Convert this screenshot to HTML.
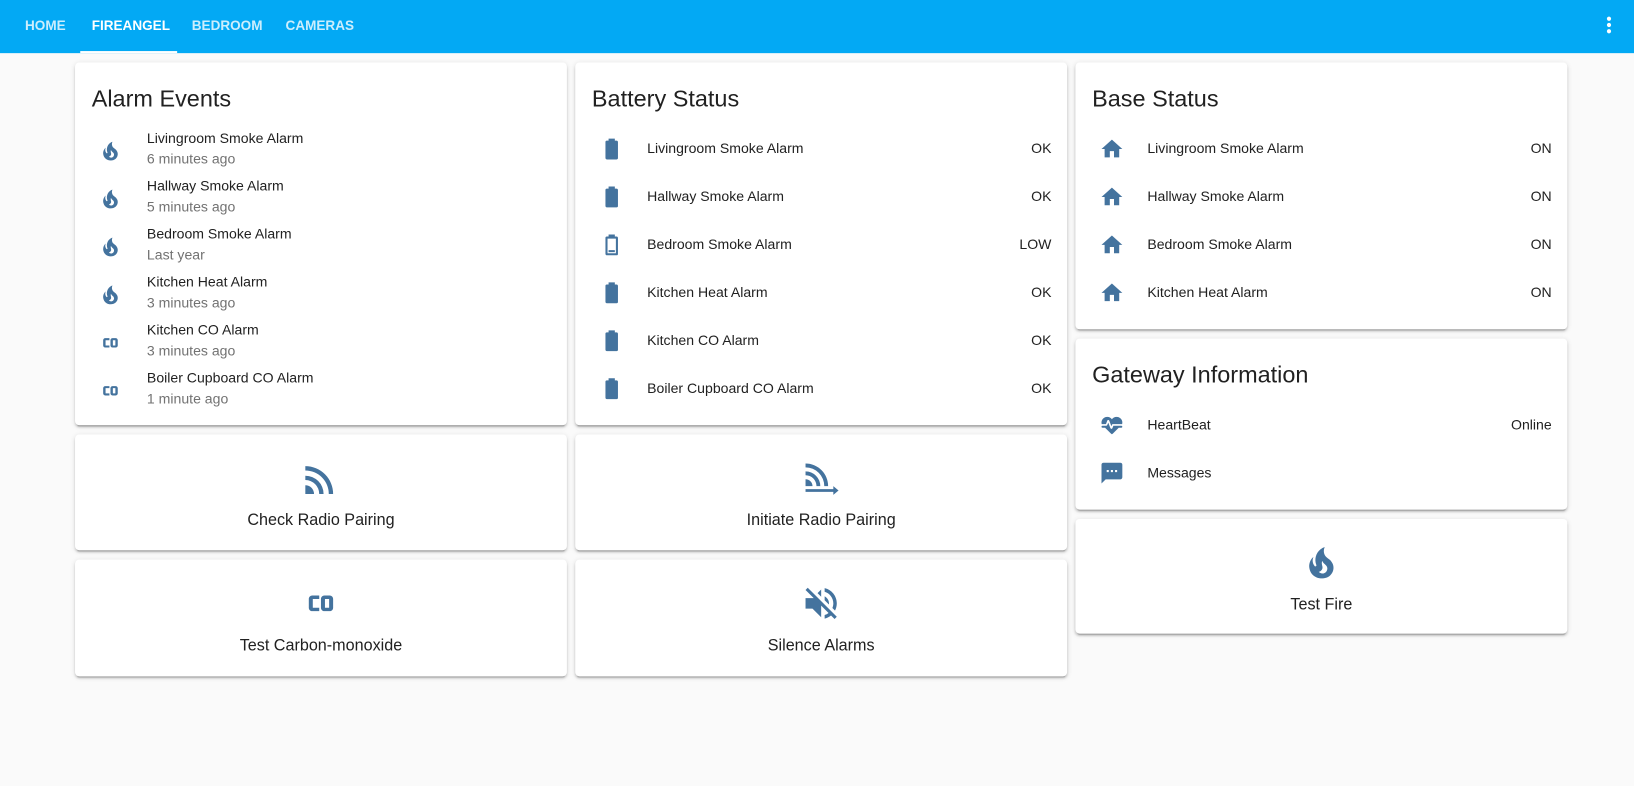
<!DOCTYPE html>
<html><head><meta charset="utf-8"><style>
*{box-sizing:border-box;margin:0;padding:0}
body{width:1634px;height:785px;background:#fafafa;font-family:"Liberation Sans",sans-serif;color:#212121;position:relative;overflow:hidden}
#w{position:absolute;left:0;top:0;width:1568px;height:754px;transform:scale(1.04209);transform-origin:0 0}
.hdr{position:absolute;left:0;top:0;width:1568px;height:51px;background:#03a9f4}
.tab{position:absolute;top:17px;font-size:13px;font-weight:bold;color:rgba(255,255,255,.8)}
.card{position:absolute;background:#fff;border-radius:4px;box-shadow:0 2px 2px 0 rgba(0,0,0,.14),0 1px 5px 0 rgba(0,0,0,.12),0 3px 1px -2px rgba(0,0,0,.2)}
.title{position:absolute;left:16px;top:22px;font-size:22.5px;color:#212121}
.row{position:absolute;left:0;width:472px;height:46px;font-size:13.5px}
.row svg{position:absolute;left:23px;top:11px;width:24px;height:24px;fill:#44739e}
.row .n{position:absolute;left:69px;top:15px}
.row .v{position:absolute;right:15px;top:15px}
.ev{position:absolute;left:0;width:472px;height:46px;font-size:13.5px}
.ev svg{position:absolute;left:22px;top:11px;width:24px;height:24px;fill:#44739e}
.ev .n{position:absolute;left:69px;top:3px}
.ev .s{position:absolute;left:69px;top:23px;color:#727272}
.btn svg{position:absolute;left:216px;top:22px;width:40px;height:40px;fill:#44739e}
.btn .l{position:absolute;left:0;width:100%;top:74px;text-align:center;font-size:15.5px}
</style></head><body>
<div id="w">
<div class="hdr">
<div class="tab" style="left:24px">HOME</div>
<div class="tab" style="left:88px;color:#fff">FIREANGEL</div>
<div class="tab" style="left:184px">BEDROOM</div>
<div class="tab" style="left:274px">CAMERAS</div>
<div style="position:absolute;left:77px;top:49px;width:93px;height:2px;background:#fff"></div>
<div style="position:absolute;left:1542px;top:16px;width:4px;height:4px;border-radius:2px;background:#fff;box-shadow:0 6px 0 #fff,0 12px 0 #fff"></div>
</div>

<svg width="0" height="0" style="position:absolute"><defs>
<symbol id="fire" viewBox="0 0 24 24"><path d="M17.66 11.2C17.43 10.9 17.15 10.64 16.89 10.38C16.22 9.78 15.46 9.35 14.82 8.72C13.33 7.26 13 4.85 13.95 3C13 3.23 12.17 3.75 11.46 4.32C8.87 6.4 7.85 10.07 9.07 13.22C9.11 13.32 9.15 13.42 9.15 13.55C9.15 13.77 9 13.97 8.8 14.05C8.57 14.15 8.33 14.09 8.14 13.93C8.08 13.88 8.04 13.83 8 13.76C6.87 12.33 6.69 10.28 7.45 8.64C5.78 10 4.87 12.3 5 14.47C5.06 14.97 5.12 15.47 5.29 15.97C5.43 16.57 5.7 17.17 6 17.7C7.08 19.43 8.95 20.67 10.96 20.92C13.1 21.19 15.39 20.8 17.03 19.32C18.86 17.66 19.5 15 18.56 12.72L18.43 12.46C18.22 12 17.66 11.2 17.66 11.2M14.5 17.5C14.22 17.74 13.76 18 13.4 18.1C12.28 18.5 11.16 17.94 10.5 17.28C11.69 17 12.4 16.12 12.61 15.23C12.78 14.43 12.46 13.77 12.33 13C12.21 12.26 12.23 11.63 12.5 10.94C12.69 11.32 12.89 11.7 13.13 12C13.9 13 15.11 13.44 15.37 14.8C15.41 14.94 15.43 15.08 15.43 15.23C15.46 16.05 15.1 16.95 14.5 17.5H14.5Z"/></symbol>
<symbol id="co" viewBox="0 0 24 24"><path d="M6 7.5C4.9 7.5 4 8.4 4 9.5V14.5C4 15.6 4.9 16.5 6 16.5H10V14.5H6.3V9.5H10V7.5H6M13 7.5C11.9 7.5 11 8.4 11 9.5V14.5C11 15.6 11.9 16.5 13 16.5H16C17.1 16.5 18 15.6 18 14.5V9.5C18 8.4 17.1 7.5 16 7.5H13M13.3 9.5H15.7V14.5H13.3V9.5Z" transform="translate(1 0)"/></symbol>
<symbol id="bat" viewBox="0 0 24 24"><path d="M16.67,4H15V2H9V4H7.33A1.33,1.33 0 0,0 6,5.33V20.67C6,21.4 6.6,22 7.33,22H16.67A1.33,1.33 0 0,0 18,20.67V5.33C18,4.6 17.4,4 16.67,4Z"/></symbol>
<symbol id="batlow" viewBox="0 0 24 24"><path d="M16,20H8V6H16M16.67,4H15V2H9V4H7.33A1.33,1.33 0 0,0 6,5.33V20.67C6,21.4 6.6,22 7.33,22H16.67A1.33,1.33 0 0,0 18,20.67V5.33C18,4.6 17.4,4 16.67,4ZM9,17H15V19H9Z"/></symbol>
<symbol id="home" viewBox="0 0 24 24"><path d="M10,20V14H14V20H19V12H22L12,3L2,12H5V20H10Z"/></symbol>
</defs></svg>

<div class="card" style="left:72px;top:60px;width:472px;height:348px">
<div class="title">Alarm Events</div>
<div class="ev" style="top:62px"><svg><use href="#fire"/></svg><div class="n">Livingroom Smoke Alarm</div><div class="s">6 minutes ago</div></div>
<div class="ev" style="top:108px"><svg><use href="#fire"/></svg><div class="n">Hallway Smoke Alarm</div><div class="s">5 minutes ago</div></div>
<div class="ev" style="top:154px"><svg><use href="#fire"/></svg><div class="n">Bedroom Smoke Alarm</div><div class="s">Last year</div></div>
<div class="ev" style="top:200px"><svg><use href="#fire"/></svg><div class="n">Kitchen Heat Alarm</div><div class="s">3 minutes ago</div></div>
<div class="ev" style="top:246px"><svg><use href="#co"/></svg><div class="n">Kitchen CO Alarm</div><div class="s">3 minutes ago</div></div>
<div class="ev" style="top:292px"><svg><use href="#co"/></svg><div class="n">Boiler Cupboard CO Alarm</div><div class="s">1 minute ago</div></div>
</div>

<div class="card" style="left:552px;top:60px;width:472px;height:348px">
<div class="title">Battery Status</div>
<div class="row" style="top:60px"><svg><use href="#bat"/></svg><div class="n">Livingroom Smoke Alarm</div><div class="v">OK</div></div>
<div class="row" style="top:106px"><svg><use href="#bat"/></svg><div class="n">Hallway Smoke Alarm</div><div class="v">OK</div></div>
<div class="row" style="top:152px"><svg><use href="#batlow"/></svg><div class="n">Bedroom Smoke Alarm</div><div class="v">LOW</div></div>
<div class="row" style="top:198px"><svg><use href="#bat"/></svg><div class="n">Kitchen Heat Alarm</div><div class="v">OK</div></div>
<div class="row" style="top:244px"><svg><use href="#bat"/></svg><div class="n">Kitchen CO Alarm</div><div class="v">OK</div></div>
<div class="row" style="top:290px"><svg><use href="#bat"/></svg><div class="n">Boiler Cupboard CO Alarm</div><div class="v">OK</div></div>
</div>

<div class="card" style="left:1032px;top:60px;width:472px;height:256px">
<div class="title">Base Status</div>
<div class="row" style="top:60px"><svg><use href="#home"/></svg><div class="n">Livingroom Smoke Alarm</div><div class="v">ON</div></div>
<div class="row" style="top:106px"><svg><use href="#home"/></svg><div class="n">Hallway Smoke Alarm</div><div class="v">ON</div></div>
<div class="row" style="top:152px"><svg><use href="#home"/></svg><div class="n">Bedroom Smoke Alarm</div><div class="v">ON</div></div>
<div class="row" style="top:198px"><svg><use href="#home"/></svg><div class="n">Kitchen Heat Alarm</div><div class="v">ON</div></div>
</div>

<div class="card" style="left:1032px;top:325px;width:472px;height:164px">
<div class="title">Gateway Information</div>
<div class="row" style="top:60px"><svg viewBox="0 0 24 24"><path d="M7.5,4A5.5,5.5 0 0,0 2,9.5C2,10 2.09,10.5 2.22,11H6.3L7.57,7.63C7.87,6.83 9.05,6.75 9.43,7.63L11.5,13L12.09,11.58C12.22,11.25 12.57,11 13,11H21.78C21.91,10.5 22,10 22,9.5A5.5,5.5 0 0,0 16.5,4C14.64,4 13,4.93 12,6.34C11,4.93 9.36,4 7.5,4V4M3,12.5A1,1 0 0,0 2,13.5A1,1 0 0,0 3,14.5H5.44L11,20C12,20.9 12,20.9 13,20L18.56,14.5H21A1,1 0 0,0 22,13.5A1,1 0 0,0 21,12.5H13.4L12.47,14.8C12.07,15.81 10.92,15.67 10.55,14.83L8.5,9.5L7.54,11.83C7.39,12.21 7.05,12.5 6.6,12.5H3Z"/></svg><div class="n">HeartBeat</div><div class="v">Online</div></div>
<div class="row" style="top:106px"><svg viewBox="0 0 24 24"><path d="M20,2H4A2,2 0 0,0 2,4V22L6,18H20A2,2 0 0,0 22,16V4A2,2 0 0,0 20,2M17,11H15V9H17M13,11H11V9H13M9,11H7V9H9"/></svg><div class="n">Messages</div></div>
</div>

<div class="card btn" style="left:72px;top:417px;width:472px;height:111px">
<svg viewBox="0 0 24 24"><path d="M3 16A5 5 0 0 1 8 21H3Z M3 10.5A10.5 10.5 0 0 1 13.5 21H11A8 8 0 0 0 3 13Z M3 5A16 16 0 0 1 19 21H16.5A13.5 13.5 0 0 0 3 7.5Z"/></svg>
<div class="l">Check Radio Pairing</div></div>
<div class="card btn" style="left:552px;top:417px;width:472px;height:111px">
<svg viewBox="0 0 24 24"><path d="M3 12.5A4 4 0 0 1 7 16.5H3Z M3 8A8.5 8.5 0 0 1 11.5 16.5H9.3A6.3 6.3 0 0 0 3 10.2Z M3 3.5A13 13 0 0 1 16 16.5H13.8A10.8 10.8 0 0 0 3 5.7Z M3 18.2H19V16.5L22 19L19 21.5V19.8H3Z"/></svg>
<div class="l">Initiate Radio Pairing</div></div>
<div class="card btn" style="left:1032px;top:498px;width:472px;height:110px">
<svg viewBox="0 0 24 24"><use href="#fire"/></svg>
<div class="l">Test Fire</div></div>
<div class="card btn" style="left:72px;top:537px;width:472px;height:112px">
<svg viewBox="0 0 24 24"><use href="#co"/></svg>
<div class="l">Test Carbon-monoxide</div></div>
<div class="card btn" style="left:552px;top:537px;width:472px;height:112px">
<svg viewBox="0 0 24 24"><path d="M12,4L9.91,6.09L12,8.18M4.27,3L3,4.27L7.73,9H3V15H7L12,20V13.27L16.25,17.53C15.58,18.04 14.83,18.46 14,18.7V20.77C15.38,20.45 16.630,19.82 17.68,18.96L19.73,21L21,19.73L12,10.73M19,12C19,12.94 18.8,13.82 18.46,14.64L19.97,16.15C20.62,14.91 21,13.5 21,12C21,7.72 18,4.14 14,3.23V5.29C16.89,6.15 19,8.83 19,12M16.5,12C16.5,10.23 15.5,8.71 14,7.97V10.18L16.45,12.63C16.5,12.43 16.5,12.21 16.5,12Z"/></svg>
<div class="l">Silence Alarms</div></div>
</div>
</body></html>
